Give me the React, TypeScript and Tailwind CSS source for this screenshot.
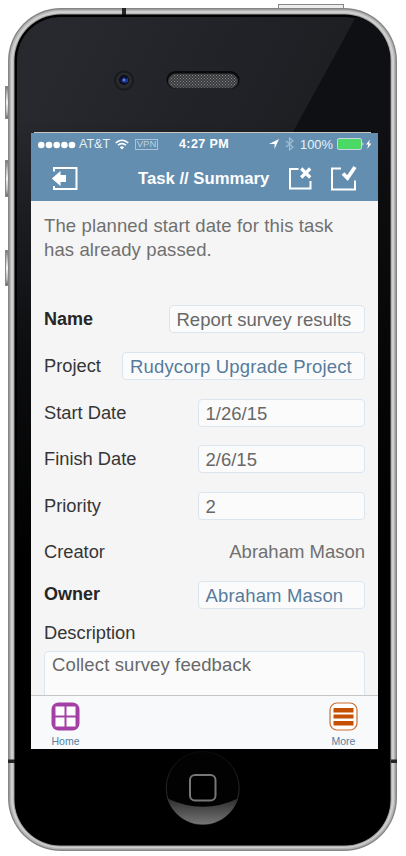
import type { ReactNode } from 'react';

const fields = [
    { label: 'Name', value: 'Report survey results', width: 'w-[196.5px]', required: true },
    { label: 'Project', value: 'Rudycorp Upgrade Project', width: 'w-[243px]', link: true },
    { label: 'Start Date', value: '1/26/15', width: 'w-[167.5px]' },
    { label: 'Finish Date', value: '2/6/15', width: 'w-[167.5px]' },
    { label: 'Priority', value: '2', width: 'w-[167.5px]' },
];

function PhoneFrame() {
    return (
        <svg className="absolute inset-0" width="406" height="856" viewBox="0 0 406 856" fill="none">
            <defs>
                <linearGradient id="glass" x1="60" y1="15" x2="290" y2="130" gradientUnits="userSpaceOnUse">
                    <stop stopColor="#27292f" />
                    <stop offset="1" stopColor="#1d1f23" />
                </linearGradient>
                <linearGradient id="fade" x1="0" y1="120" x2="0" y2="560" gradientUnits="userSpaceOnUse">
                    <stop stopColor="#000" stopOpacity="0" />
                    <stop offset="0.55" stopColor="#000" stopOpacity="0.65" />
                    <stop offset="1" stopColor="#000" />
                </linearGradient>
                <linearGradient id="key" x1="0" y1="0" x2="0" y2="1">
                    <stop stopColor="#777" />
                    <stop offset="0.25" stopColor="#bbb" />
                    <stop offset="0.5" stopColor="#f4f4f4" />
                    <stop offset="0.8" stopColor="#bbb" />
                    <stop offset="1" stopColor="#666" />
                </linearGradient>
                <linearGradient id="shine" x1="0" y1="798" x2="0" y2="825" gradientUnits="userSpaceOnUse">
                    <stop stopColor="#2c2c2c" />
                    <stop offset="1" stopColor="#777" />
                </linearGradient>
                <linearGradient id="ring" x1="0" y1="751" x2="0" y2="825" gradientUnits="userSpaceOnUse">
                    <stop stopColor="#0a0a0a" />
                    <stop offset="1" stopColor="#444" />
                </linearGradient>
                <pattern id="mesh" width="3" height="3" patternUnits="userSpaceOnUse">
                    <rect width="3" height="3" fill="#38393c" />
                    <path d="M0 0h1v1H0zM1.5 1.5h1v1h-1z" fill="#8a8a8a" />
                </pattern>
                <clipPath id="face">
                    <rect x="15" y="15" width="375" height="830" rx="45" />
                </clipPath>
            </defs>

            {/* Side and power keys */}
            <rect x="5.5" y="86.5" width="4" height="32" fill="url(#key)" stroke="#888" />
            <rect x="5.5" y="160.5" width="4" height="36" fill="url(#key)" stroke="#888" />
            <rect x="5.5" y="250.5" width="4" height="35" fill="url(#key)" stroke="#888" />
            <rect x="278.5" y="4.5" width="65" height="5" fill="#eee" stroke="#888" />

            {/* Metal band */}
            <rect x="8" y="8" width="389" height="843" rx="53" fill="#858585" />
            <rect x="9.5" y="9.5" width="386" height="840" rx="51" fill="#b4b4b4" />
            <rect x="11" y="11" width="383" height="837" rx="50" fill="#d0d0d0" />
            <rect x="13.5" y="13.5" width="378" height="833" rx="47" fill="#999" />
            <path d="M122 8h4v7h-4zM8 759.5h7v3.5H8zM391 759.5h6v3.5h-6z" fill="#252525" />
            <rect x="14.5" y="14.5" width="376" height="831" rx="46" fill="#000" />

            {/* Glass */}
            <g clipPath="url(#face)">
                <rect x="17" y="17" width="372" height="828" rx="43" fill="url(#glass)" />
                <path d="M357 15L-100 850H400V15Z" fill="#0f1013" />
                <rect x="15" y="120" width="376" height="730" fill="url(#fade)" />
            </g>

            {/* Camera */}
            <circle cx="124" cy="80.5" r="10" fill="#191a1d" />
            <circle cx="124" cy="80.5" r="8" fill="#292a2c" />
            <circle cx="124" cy="80" r="5" fill="#0b0e21" />
            <path d="M121 80l3-3 2 2 2-1v4l-3 1-3-1z" fill="#1c3896" />
            <circle cx="124" cy="80" r="1.2" fill="#6586dc" />

            {/* Speaker */}
            <rect x="166.5" y="71" width="73" height="18" rx="9" fill="#08090a" />
            <rect x="168.5" y="74" width="69" height="14" rx="7" fill="url(#mesh)" stroke="#3b3c3e" />

            {/* Home button */}
            <circle cx="202.7" cy="788" r="36.5" fill="#020202" stroke="url(#ring)" />
            <path d="M167.5 798.5Q203 815 238 798.5A37 37 0 0 1 167.5 798.5Z" fill="url(#shine)" />
            <rect x="190" y="775" width="25.5" height="25.5" rx="5" fill="#000" stroke="#777" strokeWidth="2" />
            <path d="M34 132.5H371" stroke="#c9c5c1" />
        </svg>
    );
}

function StatusBar() {
    return (
        <div className="flex h-[23px] items-center pl-[7px] pr-[6px] text-[12.5px] text-white">
            <div className="flex w-[141px] items-center">
                <svg width="38" height="8" viewBox="0 0 38 8" fill="#fff">
                    {[3.3, 11, 18.7, 26.4, 34].map((x) => (
                        <circle key={x} cx={x} cy="4" r="3.3" />
                    ))}
                </svg>
                <span className="ml-[3px] whitespace-nowrap text-[#e9f1f6]">AT&amp;T</span>
                <svg className="ml-[5px]" width="14" height="11" viewBox="0 0 14 11" fill="none" stroke="#fff" strokeWidth="1.6">
                    <path d="M.8 4C4.2.3 9.8.3 13.2 4M3 6.3C5.3 4 8.7 4 11 6.3" />
                    <path d="M4.8 8.2Q7 6.2 9.2 8.2L7 10.5Z" fill="#fff" stroke="none" />
                </svg>
                <span className="ml-[6px] flex h-[11px] w-[23px] items-center justify-center border border-[#a9c4d6] text-[9.5px] text-[#bdd2df]">
                    VPN
                </span>
            </div>
            <span className="whitespace-nowrap text-[12.5px] font-bold tracking-[0.4px]">4:27 PM</span>
            <div className="ml-auto flex items-center">
                <svg width="10" height="10" viewBox="0 0 9 9" fill="#fff">
                    <path d="M9 0L5 9V4.5H0Z" />
                </svg>
                <svg className="ml-[6px]" width="9" height="14" viewBox="0 0 9 14" fill="none" stroke="#9fbed2" strokeWidth="1.2">
                    <path d="M1 4l7 6-3.5 3V1L8 4l-7 6" />
                </svg>
                <span className="ml-[6px] text-[12.9px] text-[#e9f1f6]">100%</span>
                <svg className="ml-[3px]" width="36" height="12" viewBox="0 0 36 12">
                    <rect x="1.5" y=".5" width="24" height="11" rx="1.5" fill="#4bd864" stroke="#c4d6e2" />
                    <path d="M26.5 4Q28.5 6 26.5 8Z" fill="#e4edf2" />
                    <path d="M34 1.5L30 6.5h2.3L31.2 11l4.3-5.5h-2.5Z" fill="#fff" />
                </svg>
            </div>
        </div>
    );
}

function HeaderIcon({ children, className }: { children: ReactNode; className: string }) {
    return (
        <button className={className}>
            <svg width="28" height="28" viewBox="0 0 28 28" fill="none" stroke="#fff" strokeWidth="2">
                {children}
            </svg>
        </button>
    );
}

function Header() {
    return (
        <header className="h-[68px] shrink-0 bg-[#638eb0]">
            <StatusBar />
            <div className="flex h-[45px] items-center">
                <HeaderIcon className="ml-[20px]">
                    <path d="M3 6.5V3H25.5V24H3V21" />
                    <path d="M.8 13.5L9.5 6V10H15V17H9.5V21Z" fill="#fff" stroke="none" />
                </HeaderIcon>
                <h1 className="ml-[59px] w-[132px] whitespace-nowrap text-[16.7px] font-bold text-white">Task // Summary</h1>
                <HeaderIcon className="ml-[16px]">
                    <path d="M12.5 4H4V23.5H24.5V16" />
                    <path d="M15.2 3.5L24.2 12.5M24.2 3.5L15.2 12.5" strokeWidth="3.2" />
                </HeaderIcon>
                <HeaderIcon className="ml-[15px]">
                    <path d="M12 3.5H3V24.5H26V15.500" />
                    <path d="M14 8.5L18.5 13L26 2" strokeWidth="3.8" />
                </HeaderIcon>
            </div>
        </header>
    );
}

function Field({ value, width, link }: { value: string; width: string; link?: boolean }) {
    return (
        <div
            className={`${width} h-[28px] whitespace-nowrap rounded-[4px] border border-[#dae5f0] bg-[#fbfbfb] pl-[7px] text-[18.5px] leading-[27px] ${
                link ? 'tracking-[0.16px] text-[#567b9b]' : 'text-[#686868]'
            }`}
        >
            {value}
        </div>
    );
}

function TabBar() {
    return (
        <nav className="flex h-[54px] shrink-0 justify-between border-t border-[#c4c7ca] bg-[#f7f9fb] px-[19px] pt-[6px] text-[10.5px] leading-[13px] text-[#567fa1]">
            <button className="flex w-[31px] flex-col items-center gap-[4px]">
                <svg className="shrink-0" width="29" height="29" viewBox="0 0 29 29">
                    <rect x=".5" y=".5" width="28" height="28" rx="7" fill="#a440a5" />
                    <path d="M4.5 4.5h9v9h-9zM15.5 4.5h9v9h-9zM4.5 15.5h9v9h-9zM15.5 15.5h9v9h-9z" fill="#fff" />
                </svg>
                <span>Home</span>
            </button>
            <button className="flex w-[31px] flex-col items-center gap-[4px]">
                <svg className="shrink-0" width="29" height="29" viewBox="0 0 29 29">
                    <rect x="1" y="1" width="27" height="27" rx="7" fill="#fff" stroke="#cf6a2d" strokeWidth="1.2" />
                    <path d="M4.5 6h20v4.5h-20zM4.5 12.5h20v4h-20zM4.5 19h20v4.5h-20z" fill="#c54f05" />
                </svg>
                <span>More</span>
            </button>
        </nav>
    );
}

export default function App() {
    return (
        <div className="relative h-[856px] w-[406px] overflow-hidden bg-white pl-[31px] pt-[133px] font-['Liberation_Sans',Arial,sans-serif]">
            <PhoneFrame />
            <div className="relative flex h-[616px] w-[347px] flex-col overflow-hidden bg-[#f5f5f5]">
                <Header />
                <main className="min-h-0 flex-1 overflow-hidden px-[13px] pt-[13px] text-[18.3px] text-[#353535]">
                    <p className="mb-[43.4px] h-[48px] whitespace-nowrap text-[18.5px] leading-[24px] tracking-[0.12px] text-[#707070]">
                        The planned start date for this task
                        <br />
                        has already passed.
                    </p>
                    {fields.map((field) => (
                        <div key={field.label} className="mb-[18.7px] flex h-[28px] items-center justify-between">
                            <span className={field.required ? 'text-[18px] font-bold text-[#262626]' : 'leading-[26px]'}>{field.label}</span>
                            <Field value={field.value} width={field.width} link={field.link} />
                        </div>
                    ))}
                    <div className="mb-[16px] flex h-[26px] items-center justify-between">
                        <span>Creator</span>
                        <span className="text-[18.5px] text-[#707070]">Abraham Mason</span>
                    </div>
                    <div className="flex h-[28px] items-center justify-between">
                        <span className="text-[18px] font-bold text-[#262626]">Owner</span>
                        <Field value="Abraham Mason" width="w-[167.5px]" link />
                    </div>
                    <div className="mt-[11px] h-[31px] leading-[26px]">Description</div>
                    <div className="h-[80px] rounded-[4px] border border-[#dae5f0] bg-[#fbfbfb] pl-[7px] text-[18.5px] leading-[26px] tracking-[0.12px] text-[#686868]">
                        Collect survey feedback
                    </div>
                </main>
                <TabBar />
            </div>
        </div>
    );
}
